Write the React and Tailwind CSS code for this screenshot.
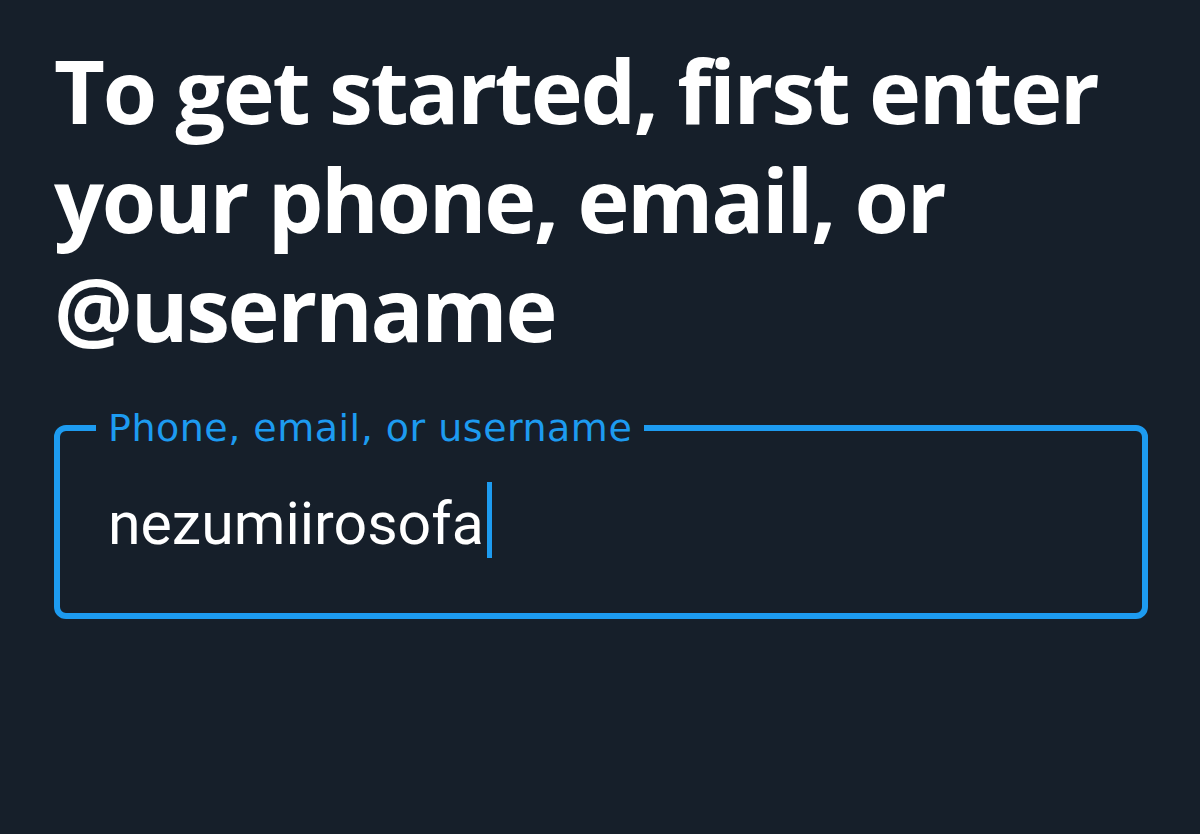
export default function App() {
  return (
    <div className="min-h-screen w-full bg-[#161f2a] px-[54px] pt-[36px]">
      <h1
        className="text-[88px] leading-[109px] font-bold text-white tracking-[-2.3px]"
        style={{ fontFamily: '"Open Sans", sans-serif' }}
      >
        To get started, first enter your phone, email, or @username
      </h1>
      <fieldset className="mt-[43px] w-[1094px] rounded-[12px] border-[6px] border-[#1d9bf0] pl-[36px] pr-4">
        <legend
          className="px-3 text-[38px] leading-[44px] tracking-[0.5px] text-[#1d9bf0]"
          style={{ fontFamily: '"DejaVu Sans", sans-serif' }}
        >
          Phone, email, or username
        </legend>
        <div className="flex items-start pt-[32px] pb-[55px] pl-3">
          <span
            className="mt-[8px] text-[59px] leading-[68px] text-white"
            style={{ fontFamily: 'Roboto, sans-serif' }}
          >
            nezumiirosofa
          </span>
          <span className="ml-[3px] h-[76px] w-[5px] bg-[#1d9bf0]" />
        </div>
      </fieldset>
    </div>
  );
}
